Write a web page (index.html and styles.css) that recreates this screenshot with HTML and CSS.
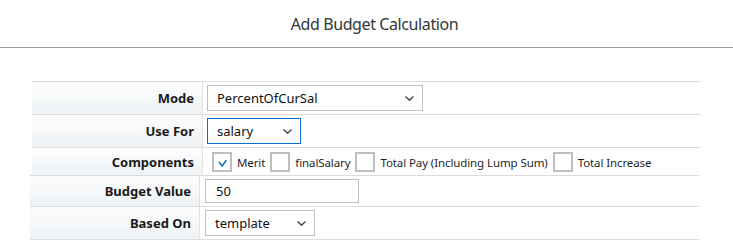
FILE: index.html
```html
<!DOCTYPE html>
<html>
<head>
<meta charset="utf-8">
<link rel="stylesheet" href="styles.css">
</head>
<body>
<header class="dialog-header"><h1 class="dialog-title">Add Budget Calculation</h1></header>
<main class="form">
  <section class="grid grid-a">
    <div class="row row-mode">
      <div class="label">Mode</div>
      <div class="value">
        <div class="select select-mode"><span>PercentOfCurSal</span><svg class="chev" width="9" height="5" viewBox="0 0 9 5"><polyline points="0.5,0.5 4.5,4.3 8.5,0.5" fill="none" stroke="#32363a" stroke-width="1.2"/></svg></div>
      </div>
    </div>
    <div class="row row-use">
      <div class="label">Use For</div>
      <div class="value">
        <div class="select select-use focused"><span>salary</span><svg class="chev" width="9" height="5" viewBox="0 0 9 5"><polyline points="0.5,0.5 4.5,4.3 8.5,0.5" fill="none" stroke="#32363a" stroke-width="1.2"/></svg></div>
      </div>
    </div>
    <div class="row row-comp">
      <div class="label">Components</div>
      <div class="value checks">
        <label class="check"><span class="box"><svg width="16" height="16" viewBox="0 0 16 16"><polyline points="5,7 8.2,11 12.3,5.3" fill="none" stroke="#0a6ed1" stroke-width="1.5"/></svg></span><span class="ctext">Merit</span></label>
        <label class="check"><span class="box"></span><span class="ctext">finalSalary</span></label>
        <label class="check"><span class="box"></span><span class="ctext">Total Pay (Including Lump Sum)</span></label>
        <label class="check"><span class="box"></span><span class="ctext">Total Increase</span></label>
      </div>
    </div>
  </section>
  <section class="grid grid-b">
    <div class="row row-budget">
      <div class="label">Budget Value</div>
      <div class="value">
        <div class="input">50</div>
      </div>
    </div>
    <div class="row row-based">
      <div class="label">Based On</div>
      <div class="value">
        <div class="select select-based"><span>template</span><svg class="chev" width="9" height="5" viewBox="0 0 9 5"><polyline points="0.5,0.5 4.5,4.3 8.5,0.5" fill="none" stroke="#32363a" stroke-width="1.2"/></svg></div>
      </div>
    </div>
  </section>
</main>
</body>
</html>
```
FILE: styles.css
```css
html, body {
  margin: 0;
  padding: 0;
  background: #ffffff;
  font-family: "Noto Sans", "Open Sans", sans-serif;
  color: #1f1f1f;
}

.dialog-header {
  height: 47px;
  border-bottom: 1px solid #9a9a9a;
  display: flex;
  align-items: center;
  justify-content: center;
  padding-left: 16px;
}

.dialog-title {
  margin: 0;
  font-size: 16px;
  letter-spacing: -0.4px;
  font-weight: 400;
  color: #32363a;
  padding-top: 1px;
}

.form {
  padding-top: 33px;
}

.grid {
  width: 669px;
  display: flex;
  flex-direction: column;
}

.grid-a { margin-left: 32px; }
.grid-b { margin-left: 30px; border-bottom: 1px solid #dcdcdc; }

.row {
  display: flex;
  border-top: 1px solid #dcdcdc;
}

.label {
  box-sizing: border-box;
  width: 171px;
  flex: none;
  border-right: 1px solid #e2e2e2;
  background: linear-gradient(#fdfdfd, #eef2f5);
  display: flex;
  align-items: center;
  justify-content: flex-end;
  padding-right: 8px;
  font-size: 13px;
  font-weight: 700;
  color: #1a1a1a;
}

.grid-b .label { width: 170px; }

.value {
  display: flex;
  align-items: center;
  padding: 3px 4px;
}

.grid-b .value { padding-left: 5px; }

.row-mode .value, .row-use .value { height: 26px; }
.row-comp .value { height: 27px; padding: 0 0 0 9px; }
.row-budget .value { height: 24px; }
.row-based .value { height: 26px; padding-bottom: 3px; }

.select {
  box-sizing: border-box;
  height: 26px;
  border: 1px solid #bfbfbf;
  display: flex;
  align-items: center;
  justify-content: space-between;
  padding: 0 8px 0 9px;
  font-size: 13px;
  color: #111;
}

.select-mode { width: 216px; }
.select-use { width: 94px; }
.select-based { width: 110px; height: 26px; }
.focused { border-color: #0a6ed1; }

.chev { display: block; margin-top: 1px; }

.input {
  box-sizing: border-box;
  width: 154px;
  height: 24px;
  border: 1px solid #bfbfbf;
  display: flex;
  align-items: center;
  padding-left: 10px;
  font-size: 13px;
  color: #111;
}

.checks { gap: 5px; }

.check {
  display: flex;
  align-items: center;
  gap: 5px;
  padding-top: 1px;
}

.box {
  box-sizing: border-box;
  width: 20px;
  height: 20px;
  border: 2px solid #bfbfbf;
  display: flex;
  align-items: center;
  justify-content: center;
}

.box svg { display: block; margin-top: 2px; }

.ctext {
  font-size: 11.5px;
  letter-spacing: -0.1px;
  color: #1f1f1f;
}
```
